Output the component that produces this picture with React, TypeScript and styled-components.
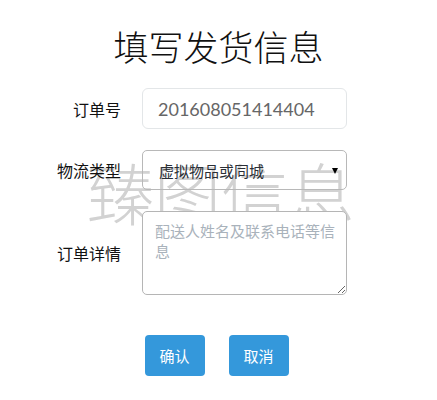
import React from "react";
import styled, { createGlobalStyle } from "styled-components";

const Global = createGlobalStyle`
  html, body { margin: 0; padding: 0; background: #fff; }
  body { font-family: "Noto Sans CJK SC", "Noto Sans", sans-serif; color: #222; }
  * { box-sizing: border-box; }
`;

const Page = styled.div`
  width: 437px;
  height: 400px;
  display: flex;
  flex-direction: column;
  align-items: center;
`;

const Title = styled.h1`
  margin: 28px 0 0;
  font-size: 35px;
  line-height: 35px;
  font-weight: 300;
  color: #111;
`;

const Form = styled.div`
  position: relative;
  width: 437px;
  margin-top: 25px;
  display: grid;
  grid-template-columns: 121px 205px;
  column-gap: 21px;
  row-gap: 21px;
  align-items: center;
`;

const Label = styled.label`
  justify-self: end;
  font-size: 16px;
  line-height: 20px;
  color: #111;
  position: relative;
  z-index: 1;
`;

const Field = styled.div<{ h: number }>`
  position: relative;
  z-index: 1;
  height: ${(p) => p.h}px;
`;

const TextInput = styled.input`
  width: 100%;
  height: 100%;
  border: 1px solid #e3e6e8;
  border-radius: 6px;
  padding: 0 0 0 15px;
  font-family: Lato, "Noto Sans", sans-serif;
  font-size: 18px;
  color: #666;
  background: #fff;
  outline: none;
`;

const Select = styled.div`
  width: 100%;
  height: 100%;
  border: 1px solid #b8b8b8;
  border-radius: 5px;
  padding: 0 8px 0 16px;
  display: flex;
  align-items: center;
  justify-content: space-between;
  font-size: 15px;
  color: #2a2f36;
  background: transparent;
`;

const Arrow = styled.span`
  width: 0;
  height: 0;
  border-left: 3px solid transparent;
  border-right: 3px solid transparent;
  border-top: 6px solid #000;
  margin-top: 1px;
`;

const TextArea = styled.textarea`
  display: block;
  width: 100%;
  height: 100%;
  border: 1px solid #b5b5b5;
  border-radius: 5px;
  padding: 9px 4px 9px 12px;
  font-family: "Noto Sans CJK SC", sans-serif;
  font-size: 15px;
  line-height: 20px;
  color: #333;
  background: #fff;
  outline: none;
  resize: both;
  &::placeholder { color: #a9b2bb; }
`;

const Watermark = styled.div`
  position: absolute;
  left: 87px;
  top: 69px;
  font-size: 67px;
  line-height: 1;
  font-weight: 300;
  color: #d2d2d2;
  white-space: nowrap;
  z-index: 0;
  pointer-events: none;
`;

const Buttons = styled.div`
  display: flex;
  gap: 24px;
  margin-top: 40px;
  margin-right: 4px;
`;

const Button = styled.button`
  width: 60px;
  height: 41px;
  border: none;
  border-radius: 4px;
  background: #3498db;
  color: #fff;
  font-family: "Noto Sans CJK SC", sans-serif;
  font-size: 15px;
  padding: 0;
`;

export default function App() {
  return (
    <Page>
      <Global />
      <Title>填写发货信息</Title>
      <Form>
        <Watermark>臻图信息</Watermark>
        <Label>订单号</Label>
        <Field h={41}>
          <TextInput defaultValue="201608051414404" />
        </Field>
        <Label>物流类型</Label>
        <Field h={40}>
          <Select>
            <span>虚拟物品或同城</span>
            <Arrow />
          </Select>
        </Field>
        <Label>订单详情</Label>
        <Field h={84}>
          <TextArea placeholder={"配送人姓名及联系电话等信\n息"} />
        </Field>
      </Form>
      <Buttons>
        <Button>确认</Button>
        <Button>取消</Button>
      </Buttons>
    </Page>
  );
}
